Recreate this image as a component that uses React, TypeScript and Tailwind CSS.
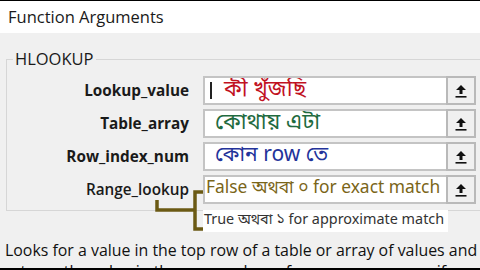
import React from 'react';

const ui = { fontFamily: '"Open Sans", "Noto Sans", sans-serif' };
const bn = { fontFamily: '"Noto Sans Bengali", "Noto Sans", "Open Sans", sans-serif' };

const UpButton: React.FC = () => (
  <div className="w-[30px] h-[29px] shrink-0 flex items-center justify-center bg-[#f0f0f0] border-2 border-[#b9b9b9]">
    <svg width="12" height="14" viewBox="0 0 12 14">
      <path d="M6 1 L11 6 L7.5 6 L7.5 10 L4.5 10 L4.5 6 L1 6 Z" fill="#111" />
      <rect x="0.5" y="12" width="11" height="1.6" fill="#111" />
    </svg>
  </div>
);

interface ArgRowProps {
  label: string;
  bold?: boolean;
  children: React.ReactNode;
}

const ArgRow: React.FC<ArgRowProps> = ({ label, bold = true, children }) => (
  <div className="flex items-center h-[29px]">
    <div className={`w-[182px] text-right text-[15.3px] text-[#1a1a1a] whitespace-nowrap ${bold ? 'font-bold' : 'font-semibold'}`} style={ui}>
      {label}
    </div>
    <div className="ml-[14px] w-[243px] h-[29px] bg-white border-2 border-r-0 border-[#c4c4c4] flex items-center overflow-hidden">
      {children}
    </div>
    <UpButton />
  </div>
);

export default function App() {
  return (
    <div className="relative w-[480px] h-[270px] overflow-hidden bg-[#f0f0f0]" style={ui}>
      <div className="h-[33px] bg-white border-t border-black flex items-center pl-[8px] text-[16.5px] text-[#1a1a1a]">
        Function Arguments
      </div>

      <fieldset className="ml-[6px] mt-[16px] w-[490px] border border-[#d6d6d6] pb-[6px]">
        <legend className="ml-[6px] px-[2px] text-[16.5px] text-[#1a1a1a] leading-[20px]">HLOOKUP</legend>
        <div className="flex flex-col gap-[4px] mt-[7px]">
          <ArgRow label="Lookup_value">
            <span className="ml-[5px] w-[2px] h-[17px] bg-[#222]" />
            <span className="ml-[12px] text-[22px] leading-[27px] text-[#c1121f]" style={bn}>কী খুঁজছি</span>
          </ArgRow>
          <ArgRow label="Table_array">
            <span className="ml-[10px] text-[22px] leading-[27px] text-[#1f6b3f]" style={bn}>কোথায় এটা</span>
          </ArgRow>
          <ArgRow label="Row_index_num">
            <span className="ml-[10px] text-[21px] leading-[27px] text-[#23339a]" style={bn}>কোন row তে</span>
          </ArgRow>
          <ArgRow label="Range_lookup" bold={false}>
            <span className="ml-[1px] text-[17.4px] text-[#7a6518] whitespace-nowrap" style={bn}>False অথবা ০ for exact match</span>
          </ArgRow>
        </div>
      </fieldset>

      <p className="mt-[29px] pl-[5px] text-[15.9px] leading-[21px] text-[#111] whitespace-nowrap">
        Looks for a value in the top row of a table or array of values and
        <br />
        returns the value in the same column from a row you specify.
      </p>

      <div className="absolute left-0 right-0 bottom-0 h-[2px] bg-black" />

      {/* annotation overlay */}
      <div className="absolute left-[203px] top-[210px] w-[245px] h-[22px] bg-white flex items-center pl-[1px] text-[14.4px] text-[#333] whitespace-nowrap" style={bn}>
        True অথবা ১ for approximate match
      </div>
      <svg className="absolute left-0 top-0" width="480" height="270">
        <path d="M157 200 V210 H195" fill="none" stroke="#6b5a14" strokeWidth="3.5" />
        <path d="M203 192 H195 V229 H203" fill="none" stroke="#6b5a14" strokeWidth="3.5" />
      </svg>
    </div>
  );
}
